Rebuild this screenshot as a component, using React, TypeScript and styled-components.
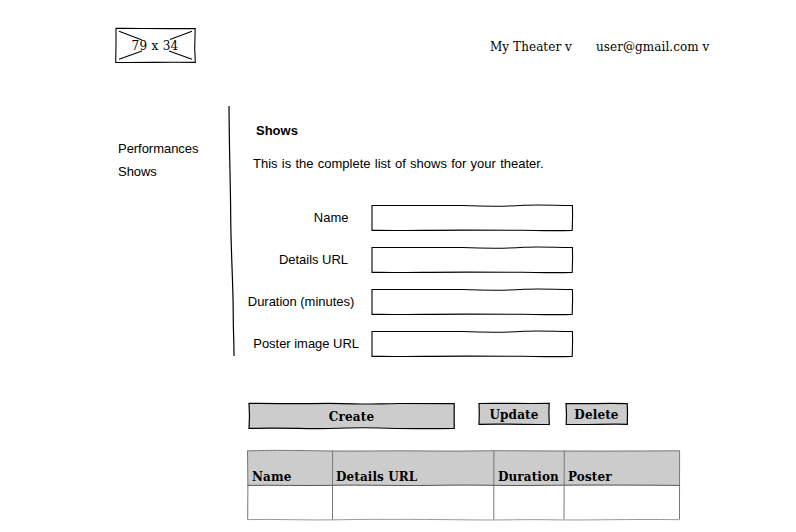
import React from "react";
import styled, { createGlobalStyle } from "styled-components";

const GlobalStyle = createGlobalStyle`
  * { box-sizing: border-box; }
  body { margin: 0; background: #fff; color: #000; overflow: hidden; }
`;

const serif = `"DejaVu Serif", serif`;

const Page = styled.div`
  width: 796px;
  height: 532px;
  font: 13px/16px "Liberation Sans", Arial, sans-serif;
`;

const Header = styled.header`
  display: flex;
  height: 106px;
  padding: 28px 0 0 115px;
`;

const Sketch = styled.div<{ $w: number; $h: number }>`
  position: relative;
  flex: none;
  width: ${(p) => p.$w}px;
  height: ${(p) => p.$h}px;
`;

const Strokes = styled.svg`
  position: absolute;
  inset: 0;
  width: 100%;
  height: 100%;
  overflow: visible;
  fill: none;
  stroke: #000;
  stroke-width: 1.1;
`;

const Logo = styled(Sketch)`
  display: flex;
  justify-content: center;
  font: 12px/36px ${serif};
  letter-spacing: 0.3px;
`;

const LogoLabel = styled.span`
  position: relative;
`;

const Nav = styled.nav`
  display: flex;
  gap: 24px;
  margin: 11px 0 0 295px;
  font: 12px/16px ${serif};
  letter-spacing: 0.07px;
  white-space: nowrap;
`;

const NavItem = styled.span<{ $w: number }>`
  width: ${(p) => p.$w}px;
`;

const Body = styled.div`
  display: flex;
`;

const Sidebar = styled.aside`
  display: flex;
  flex-direction: column;
  gap: 7px;
  width: 228px;
  padding: 35px 0 0 118px;
  letter-spacing: -0.04px;
`;

const Divider = styled.svg`
  flex: none;
  width: 8px;
  height: 250px;
  fill: none;
  stroke: #000;
  stroke-width: 1.2;
`;

const Main = styled.main`
  margin-left: 11px;
`;

const Title = styled.h1`
  margin: 17px 0 0 9px;
  font-size: 13px;
  line-height: 16px;
`;

const Intro = styled.p`
  margin: 17px 0 0 6px;
  word-spacing: 0.65px;
`;

const Form = styled.form`
  display: grid;
  gap: 16px;
  margin-top: 33px;
`;

const Row = styled.label`
  display: flex;
  align-items: center;
`;

const RowLabel = styled.span<{ $inset: number }>`
  width: 125px;
  padding-right: ${(p) => p.$inset}px;
  text-align: right;
  white-space: nowrap;
  letter-spacing: -0.03px;
`;

const Actions = styled.div`
  display: flex;
  margin: 46px 0 0 2px;
`;

const Button = styled.button<{ $w: number; $h: number; $gap?: number }>`
  position: relative;
  width: ${(p) => p.$w}px;
  height: ${(p) => p.$h}px;
  margin: 0 0 0 ${(p) => p.$gap ?? 0}px;
  padding: 1px 0 0;
  border: 0;
  background: none;
  color: #000;
  font: bold 12px/16px ${serif};
  letter-spacing: 0.15px;
`;

const ButtonText = styled.span`
  position: relative;
`;

const Table = styled(Sketch)`
  display: grid;
  grid-template-columns: 84px 162px 70px 117px;
  grid-template-rows: 35px 35px;
  margin-top: 21px;
`;

const HeadCell = styled.div`
  position: relative;
  padding: 19px 0 0 5px;
  font: bold 12px/16px ${serif};
  letter-spacing: 0.1px;
  white-space: nowrap;
`;

const Field = () => (
  <Sketch $w={201} $h={26}>
    <Strokes>
      <path d="M0 .5H90C115 1.5 140 1.1 152 .3S180 .3 200.4.5L200.6 10 200.2 25.4C180 26.1 165 25.4 150 25.3S75 24.9 50 25.4 20 25.1 0 25.4Z" />
    </Strokes>
  </Sketch>
);

const fields = [
  { label: "Name", inset: 23.6 },
  { label: "Details URL", inset: 24 },
  { label: "Duration (minutes)", inset: 17.8 },
  { label: "Poster image URL", inset: 13 },
];

const buttons = [
  {
    label: "Create", w: 205, h: 26, gap: 0,
    d: "M0 .4C25 .1 40 1 62 .6S85 .2 105 .8 125 .9 150 .5L205.2.6 205.2 25.4C180 25.7 150 25.8 130 25S105 25 80 25.5 40 24.7 0 25.4L.5 13Z",
  },
  {
    label: "Update", w: 70, h: 22, gap: 25,
    d: "M0 .5C20 .1 45 .8 70.2.4L69.9 10 70.3 21.4C50 21.8 35 20.8 0 21.3L.3 10Z",
  },
  {
    label: "Delete", w: 61, h: 22, gap: 17,
    d: "M0 .5C20 1 35 .1 61.2.6L61.5 10 61.3 21.3C45 20.6 20 22 .2 21.3L.5 12Z",
  },
];

const columns = ["Name", "Details URL", "Duration", "Poster"];

export default function App() {
  return (
    <Page>
      <GlobalStyle />
      <Header>
        <Logo $w={80} $h={35}>
          <Strokes>
            <path d="M1 .4C20 .2 40 .9 80.2.5L79.7 20 80.3 34.4C50 33.8 30 34.8.7 34.4L1 15Z" />
            <path d="M4 3.3 27 12M55 11.5 77 3.3M4 31.2 27 23M54 23 77 31.2" />
          </Strokes>
          <LogoLabel>79 x 34</LogoLabel>
        </Logo>
        <Nav>
          <NavItem $w={82}>My Theater v</NavItem>
          <NavItem $w={114}>user@gmail.com v</NavItem>
        </Nav>
      </Header>
      <Body>
        <Sidebar>
          <span>Performances</span>
          <span>Shows</span>
        </Sidebar>
        <Divider>
          <path d="M1 0C1.4 55 2.5 75 2.7 110S5 175 5.2 205 6 230 6 250" />
        </Divider>
        <Main>
          <Title>Shows</Title>
          <Intro>This is the complete list of shows for your theater.</Intro>
          <Form>
            {fields.map((f) => (
              <Row key={f.label}>
                <RowLabel $inset={f.inset}>{f.label}</RowLabel>
                <Field />
              </Row>
            ))}
          </Form>
          <Actions>
            {buttons.map((b) => (
              <Button key={b.label} $w={b.w} $h={b.h} $gap={b.gap}>
                <Strokes>
                  <path d={b.d} fill="#ccc" strokeWidth="1.2" />
                </Strokes>
                <ButtonText>{b.label}</ButtonText>
              </Button>
            ))}
          </Actions>
          <Table $w={433} $h={70}>
            <Strokes>
              <path d="M.5.7H432.5V35.5H.5Z" fill="#ccc" stroke="none" />
              <g stroke="#777" strokeWidth="1">
                <path d="M.5 .9C25 .1 40 .3 75 .9S140 .5 180 1 235 .5 270 .8 360 1.3 432.5 .8" />
                <path d="M.5 69.6C30 69 60 70.4 90 69.8S165 69.2 215 69.8 270 69.2 305 69.8 380 69 432.5 69.7" stroke="#999" />
                <path d="M.5.5.9 35 .7 69.5M85.6.5 85.5 69.5M246.9.5 246.8 69.5M317.3.5 317 69.5M432.6.5 432.5 69.5" />
                <path d="M.5 35.4C30 34.8 55 36 85 35.3S145 36 190 35.3 250 35.8 290 35.4 360 34.8 432.5 35.4" stroke="#555" />
              </g>
            </Strokes>
            {columns.map((c) => (
              <HeadCell key={c}>{c}</HeadCell>
            ))}
          </Table>
        </Main>
      </Body>
    </Page>
  );
}
